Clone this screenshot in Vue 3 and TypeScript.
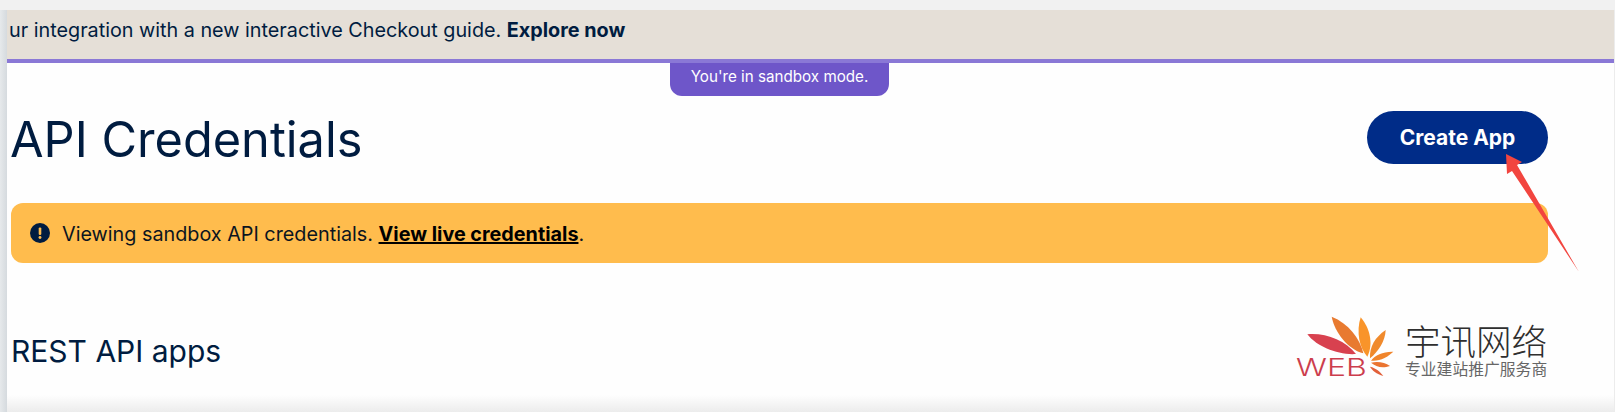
<script setup lang="ts">
const banner = 'ur integration with a new interactive Checkout guide.'
const leaves: { d: string; fill: string }[] = [
  { d: 'M112 133C165 128 225 150 258 192C205 196 140 170 112 133Z', fill: '#d8414f' },
  { d: 'M185 80C235 100 270 145 280 190C235 178 195 130 185 80Z', fill: '#e87a30' },
  { d: 'M272 82C298 112 312 160 292 200C268 175 258 125 272 82Z', fill: '#f9942a' },
  { d: 'M347 120C346 152 325 185 300 205C298 170 315 142 347 120Z', fill: '#f08a2c' },
  { d: 'M370 185C345 208 325 212 303 212C315 195 340 184 370 185Z', fill: '#f0852c' },
  { d: 'M360 228C335 236 318 230 303 218C325 213 345 218 360 228Z', fill: '#ea7430' },
  { d: 'M340 258C320 252 305 240 300 230C318 234 330 245 340 258Z', fill: '#e2603a' },
]
</script>

<template>
  <div class="page">
    <div class="top-strip"></div>
    <div class="body">
      <div class="rail"></div>
      <main class="main">
        <div class="banner">
          <span>{{ banner }} <strong>Explore now</strong></span>
        </div>
        <div class="sandbox-row">
          <div class="sandbox-tab">You're in sandbox mode.</div>
        </div>
        <div class="content">
          <header class="title-row">
            <h1>API Credentials</h1>
            <button class="create" type="button">Create App</button>
          </header>
          <div class="alert">
            <svg class="alert-icon" viewBox="0 0 20 20" width="20" height="20" aria-hidden="true">
              <circle cx="10" cy="10" r="10" fill="#001c40" />
              <rect x="8.7" y="4.4" width="2.6" height="7.6" rx="1.2" fill="#ffbc4d" />
              <circle cx="10" cy="14.5" r="1.45" fill="#ffbc4d" />
            </svg>
            <span class="alert-text">Viewing sandbox API credentials. <a href="#">View live credentials</a>.</span>
          </div>
          <h2>REST API apps</h2>
        </div>
        <div class="bottom-shade"></div>
      </main>
    </div>

    <svg class="arrow" viewBox="0 0 1615 412" width="1615" height="412" aria-hidden="true">
      <path d="M1506 154L1522 162L1517 165L1579 272L1512 171L1507 174Z" fill="#f2453f" />
    </svg>

    <div class="watermark">
      <div class="mark">
        <svg viewBox="0 0 1035 366" width="345" height="122" aria-hidden="true">
          <path v-for="(leaf, i) in leaves" :key="i" :d="leaf.d" :fill="leaf.fill" />
        </svg>
        <span class="web">WEB</span>
      </div>
      <div class="wm-text">
        <div class="wm-name">宇讯网络</div>
        <div class="wm-sub">专业建站推广服务商</div>
      </div>
    </div>
  </div>
</template>

<style>
html, body { margin: 0; background: #fff; overflow: hidden; }
</style>

<style scoped>
.page {
  position: relative;
  width: 1615px;
  height: 412px;
  display: flex;
  flex-direction: column;
  overflow: hidden;
  font-family: Inter, "Noto Sans", sans-serif;
  color: #001c40;
  background: #fefefe;
}
.top-strip { height: 10px; background: #f1f1f1; flex: none; }
.body { flex: 1; display: flex; min-height: 0; }
.rail { width: 7px; flex: none; background: linear-gradient(90deg, #e6e9eb, #d5dade); }
.main { flex: 1; display: flex; flex-direction: column; min-width: 0; border-right: 1px solid #ececec; }
.banner {
  height: 49px;
  flex: none;
  box-sizing: content-box;
  display: flex;
  align-items: center;
  padding-left: 2px;
  background: #e5dfd7;
  border-bottom: 4px solid #8a78d6;
  font-size: 19.8px;
  line-height: 41px;
  color: #001c40;
  white-space: nowrap;
}
.banner span { margin-bottom: 8px; }
.banner strong { font-weight: 700; }
.sandbox-row { height: 0; display: flex; justify-content: center; flex: none; }
.sandbox-tab {
  width: 219px;
  height: 33px;
  flex: none;
  margin-left: -62px;
  padding-bottom: 6px;
  box-sizing: border-box;
  display: flex;
  align-items: center;
  justify-content: center;
  background: #6e56c9;
  color: #fff;
  font-size: 15.2px;
  border-radius: 0 0 12px 12px;
}
.content { flex: 1; padding: 48px 66px 0 4px; min-height: 0; }
.title-row { display: flex; justify-content: space-between; align-items: center; height: 53px; }
h1 {
  margin: 4px 0 0 -1px;
  font-size: 48.7px;
  font-weight: 400;
  line-height: 53px;
  color: #001c40;
}
.create {
  width: 181px;
  height: 53px;
  border: 0;
  border-radius: 27px;
  background: #002c88;
  color: #fff;
  font-family: inherit;
  font-size: 21px;
  font-weight: 700;
}
.alert {
  margin-top: 39px;
  height: 60px;
  display: flex;
  align-items: center;
  gap: 12px;
  padding-left: 19px;
  background: #ffbc4d;
  border-radius: 12px;
  font-size: 19.8px;
  color: #0c1520;
}
.alert-icon { flex: none; }
.alert-text { padding-top: 2px; }
.alert a { color: #000; font-weight: 700; text-decoration: underline; text-decoration-thickness: 2px; }
h2 { margin: 68px 0 0 0; font-size: 30px; font-weight: 400; line-height: 40px; color: #001c40; }
.bottom-shade { height: 17px; flex: none; background: linear-gradient(180deg, #fefefe, #ececec); }
.arrow { position: absolute; left: 0; top: 0; pointer-events: none; }
.watermark { position: absolute; left: 1270px; top: 290px; width: 345px; height: 122px; }
.mark { position: absolute; left: 0; top: 0; }
.mark svg { display: block; }
.web {
  position: absolute;
  left: 26px;
  top: 64px;
  font-family: Inter, sans-serif;
  font-weight: 300;
  font-size: 23.5px;
  line-height: 28px;
  transform: scaleX(1.36);
  transform-origin: left center;
  color: #cc3d4d;
}
.wm-text {
  position: absolute;
  left: 135px;
  top: 34px;
  font-family: "Noto Sans CJK SC", sans-serif;
  white-space: nowrap;
}
.wm-name { font-size: 35.5px; line-height: 32px; font-weight: 300; color: #2f2f2f; }
.wm-sub { font-size: 15.8px; line-height: 18px; margin-top: 4px; color: #666; }
</style>
